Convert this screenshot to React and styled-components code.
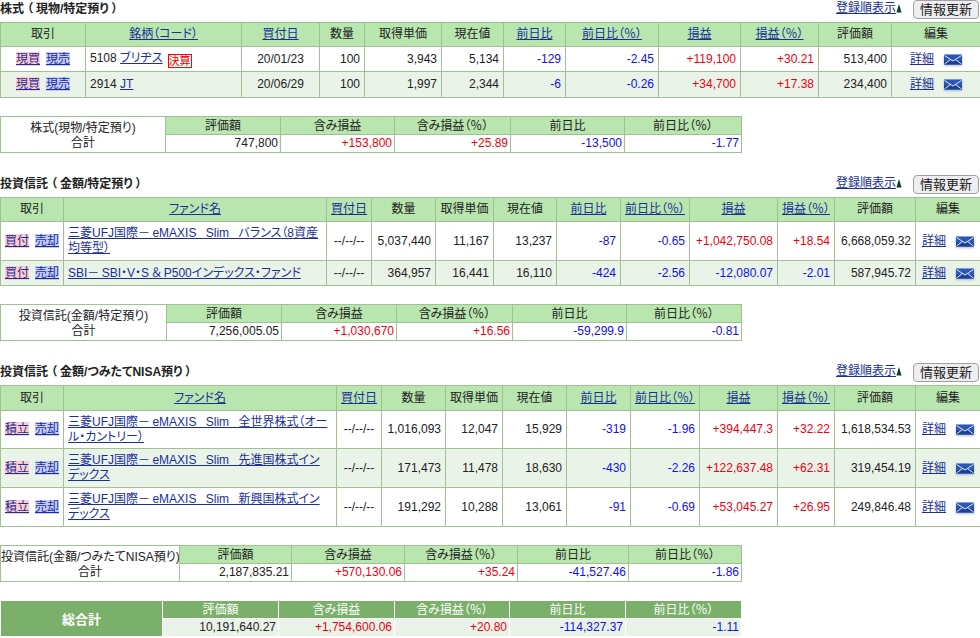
import React from "react";
import styled, { createGlobalStyle } from "styled-components";

const GlobalStyle = createGlobalStyle`
  html, body {
    margin: 0;
    background: #fff;
  }
  body {
    font-family: "Liberation Sans", "Noto Sans CJK JP", sans-serif;
    font-size: 12px;
    font-feature-settings: "palt";
    color: #222;
  }
`;

const Page = styled.div`
  width: 980px;
`;

const Section = styled.section`
  margin-bottom: 22px;
`;

const SectionHead = styled.div`
  display: flex;
  align-items: flex-start;
  justify-content: space-between;
  height: 22px;
`;

const Heading = styled.h2`
  margin: 2px 0 0;
  font-size: 12px;
  line-height: 15px;
  font-weight: bold;
`;

const Paren = styled.span`
  padding: 0 3px;
`;

const HeadTools = styled.div`
  display: flex;
  align-items: flex-start;
  margin-right: 1px;
`;

const Link = styled.a`
  color: #1a2f9c;
  text-decoration: underline;
  cursor: pointer;
`;

const SortLink = styled(Link)`
  line-height: 15px;
  margin-top: 1px;
`;

const SortMark = styled.svg`
  width: 6px;
  height: 9px;
  margin: 4px 11px 0 0;
`;

const RefreshButton = styled.button`
  width: 66px;
  height: 19px;
  padding: 0;
  border: 1px solid #a0a0a0;
  border-radius: 4px;
  background: #eeeef0;
  font-family: inherit;
  font-size: 13px;
  font-feature-settings: "palt" 0;
  line-height: 16px;
  color: #222;
`;

const Grid = styled.table`
  table-layout: fixed;
  border-collapse: collapse;
  width: ${(p) => p.$width}px;
  td,
  th {
    border: 1px solid ${(p) => (p.$total ? "#fff" : "#9fc194")};
    padding: 0 ${(p) => (p.$summary ? 2 : 4)}px;
    font-weight: normal;
    line-height: 15px;
    overflow: hidden;
  }
  th {
    background: ${(p) => (p.$total ? "#7ab06a" : "#b8e6ae")};
    color: ${(p) => (p.$total ? "#fff" : "#222")};
    text-align: center;
    white-space: nowrap;
    padding-top: ${(p) => (p.$summary ? 1 : 0)}px;
  }
`;

const Row = styled.tr`
  height: ${(p) => p.$h}px;
  background: ${(p) => (p.$alt ? "#eaf3e8" : "#fff")};
`;

const Cell = styled.td`
  text-align: ${(p) => p.$align || "right"};
  white-space: ${(p) => (p.$wrap ? "pre-line" : "nowrap")};
  color: ${(p) => (p.$sign === "+" ? "#f00010" : p.$sign === "-" ? "#1010f0" : "#222")};
`;

const LabelCell = styled.td`
  text-align: center;
  background: #fff;
  white-space: nowrap;
  && {
    padding: 2px 0 0;
  }
`;

const TotalLabel = styled.th`
  && {
    background: #7ab06a;
    font-weight: bold;
    font-size: 13px;
  }
`;

const TradeLink = styled(Link)`
  background: ${(p) => (p.$sell ? "#c6ccf8" : "#ffcccc")};
  & + & {
    margin-left: 6px;
  }
`;

const Badge = styled.span`
  display: inline-block;
  margin-left: 5px;
  border: 1px solid #f00;
  background: #fff;
  color: #e00;
  font-size: 11px;
  line-height: 12px;
  vertical-align: -3px;
`;

const EditCell = styled(Cell)`
  text-align: center;
`;

const MailIcon = styled.svg`
  width: 18px;
  height: 12px;
  margin-left: 10px;
  vertical-align: -3px;
  filter: drop-shadow(0 1px 1px #9fb6c8);
`;

const TableGap = styled.div`
  height: 18px;
`;

const TotalWrap = styled.div`
  margin-top: -4px;
`;

const Mail = () => (
  <MailIcon viewBox="0 0 18 12">
    <rect x="0" y="0.5" width="18" height="10" fill="#2a56b4" />
    <rect x="0" y="7" width="18" height="3.5" fill="#1d3f96" />
    <path d="M0.5 1.5 9 7l8.5-5.5M0.5 10 6.5 5.5M17.5 10 11.5 5.5" fill="none" stroke="#dfe9fa" strokeWidth="1" />
  </MailIcon>
);

const signOf = (v) => (v[0] === "+" || v[0] === "-" ? (v[1] === "-" ? undefined : v[0]) : undefined);

const SectionTitle = ({ children }) => (
  <SectionHead>
    <Heading>{children}</Heading>
    <HeadTools>
      <SortLink>登録順表示</SortLink>
      <SortMark viewBox="0 0 6 9">
        <path d="M3 0 5.6 8.6H0.4z" fill="#0e4030" />
      </SortMark>
      <RefreshButton>情報更新</RefreshButton>
    </HeadTools>
  </SectionHead>
);

const HoldingTable = ({ cols, nameHead, heights, rows, tradeLabel }) => (
  <Grid $width={980}>
    <colgroup>
      {cols.map((w, i) => (
        <col key={i} width={w} />
      ))}
    </colgroup>
    <thead>
      <Row $h={heights[0]}>
        <th>取引</th>
        <th><Link>{nameHead}</Link></th>
        <th><Link>買付日</Link></th>
        <th>数量</th>
        <th>取得単価</th>
        <th>現在値</th>
        <th><Link>前日比</Link></th>
        <th><Link>前日比（％）</Link></th>
        <th><Link>損益</Link></th>
        <th><Link>損益（％）</Link></th>
        <th>評価額</th>
        <th>編集</th>
      </Row>
    </thead>
    <tbody>
      {rows.map((r, i) => (
        <Row key={i} $h={heights[i + 1]} $alt={i % 2 === 1}>
          <Cell $align="center">
            <TradeLink>{tradeLabel[0]}</TradeLink>
            <TradeLink $sell>{tradeLabel[1]}</TradeLink>
          </Cell>
          <Cell $align="left" $wrap>
            {r.code && `${r.code} `}
            <Link>{r.name}</Link>
            {r.badge && <Badge>{r.badge}</Badge>}
          </Cell>
          <Cell $align="center">{r.date}</Cell>
          {r.values.map((v, j) => (
            <Cell key={j} $sign={signOf(v)}>{v}</Cell>
          ))}
          <EditCell>
            <Link>詳細</Link>
            <Mail />
          </EditCell>
        </Row>
      ))}
    </tbody>
  </Grid>
);

const SummaryTable = ({ cols, label, values, total }) => {
  const width = cols.reduce((a, b) => a + b, 0);
  return (
    <Grid $summary $width={width} $total={total}>
      <colgroup>
        {cols.map((w, i) => (
          <col key={i} width={w} />
        ))}
      </colgroup>
      <tbody>
        <Row $h={18}>
          {total ? (
            <TotalLabel rowSpan={2}>{label}</TotalLabel>
          ) : (
            <LabelCell rowSpan={2}>
              {label}
              <br />
              合計
            </LabelCell>
          )}
          <th>評価額</th>
          <th>含み損益</th>
          <th>含み損益（％）</th>
          <th>前日比</th>
          <th>前日比（％）</th>
        </Row>
        <Row $h={18} $alt={total}>
          {values.map((v, j) => (
            <Cell key={j} $sign={signOf(v)}>{v}</Cell>
          ))}
        </Row>
      </tbody>
    </Grid>
  );
};

const SLIM = "三菱UFJ国際－\u2009eMAXIS\u00a0\u2002Slim\u00a0\u2002";

const stocks = [
  { code: "5108", name: "ブリヂス", badge: "決算", date: "20/01/23", values: ["100", "3,943", "5,134", "-129", "-2.45", "+119,100", "+30.21", "513,400"] },
  { code: "2914", name: "JT", date: "20/06/29", values: ["100", "1,997", "2,344", "-6", "-0.26", "+34,700", "+17.38", "234,400"] },
];

const funds = [
  { name: `${SLIM}バランス（8資産\n均等型）`, date: "--/--/--", values: ["5,037,440", "11,167", "13,237", "-87", "-0.65", "+1,042,750.08", "+18.54", "6,668,059.32"] },
  { name: "SBI－\u2009SBI・V・S\u2009＆\u2009P500インデックス・ファンド", date: "--/--/--", values: ["364,957", "16,441", "16,110", "-424", "-2.56", "-12,080.07", "-2.01", "587,945.72"] },
];

const nisa = [
  { name: `${SLIM}全世界株式（オー\nル・カントリー）`, date: "--/--/--", values: ["1,016,093", "12,047", "15,929", "-319", "-1.96", "+394,447.3", "+32.22", "1,618,534.53"] },
  { name: `${SLIM}先進国株式イン\nデックス`, date: "--/--/--", values: ["171,473", "11,478", "18,630", "-430", "-2.26", "+122,637.48", "+62.31", "319,454.19"] },
  { name: `${SLIM}新興国株式イン\nデックス`, date: "--/--/--", values: ["191,292", "10,288", "13,061", "-91", "-0.69", "+53,045.27", "+26.95", "249,846.48"] },
];

export default function App() {
  return (
    <Page>
      <GlobalStyle />
      <Section>
        <SectionTitle>株式<Paren>（</Paren>現物/特定預り<Paren>）</Paren></SectionTitle>
        <HoldingTable
          cols={[85, 156, 78, 45, 77, 62, 62, 93, 82, 78, 73, 89]}
          nameHead="銘柄（コード）"
          heights={[24, 25, 26]}
          rows={stocks}
          tradeLabel={["現買", "現売"]}
        />
        <TableGap />
        <SummaryTable
          cols={[165, 115, 114, 116, 114, 117]}
          label="株式(現物/特定預り)"
          values={["747,800", "+153,800", "+25.89", "-13,500", "-1.77"]}
        />
      </Section>
      <Section>
        <SectionTitle>投資信託<Paren>（</Paren>金額/特定預り<Paren>）</Paren></SectionTitle>
        <HoldingTable
          cols={[63, 263, 45, 64, 58, 63, 64, 69, 88, 57, 81, 65]}
          nameHead="ファンド名"
          heights={[24, 39, 25]}
          rows={funds}
          tradeLabel={["買付", "売却"]}
        />
        <TableGap />
        <SummaryTable
          cols={[166, 115, 115, 116, 114, 115]}
          label="投資信託(金額/特定預り)"
          values={["7,256,005.05", "+1,030,670", "+16.56", "-59,299.9", "-0.81"]}
        />
      </Section>
      <Section>
        <SectionTitle>投資信託<Paren>（</Paren>金額/つみたてNISA預り<Paren>）</Paren></SectionTitle>
        <HoldingTable
          cols={[63, 273, 45, 64, 57, 64, 64, 69, 78, 57, 81, 65]}
          nameHead="ファンド名"
          heights={[25, 38, 39, 39]}
          rows={nisa}
          tradeLabel={["積立", "売却"]}
        />
        <TableGap />
        <SummaryTable
          cols={[179, 112, 113, 113, 111, 113]}
          label="投資信託(金額/つみたてNISA預り)"
          values={["2,187,835.21", "+570,130.06", "+35.24", "-41,527.46", "-1.86"]}
        />
      </Section>
      <TotalWrap>
        <SummaryTable
          total
          cols={[162, 116, 116, 115, 116, 116]}
          label="総合計"
          values={["10,191,640.27", "+1,754,600.06", "+20.80", "-114,327.37", "-1.11"]}
        />
      </TotalWrap>
    </Page>
  );
}
